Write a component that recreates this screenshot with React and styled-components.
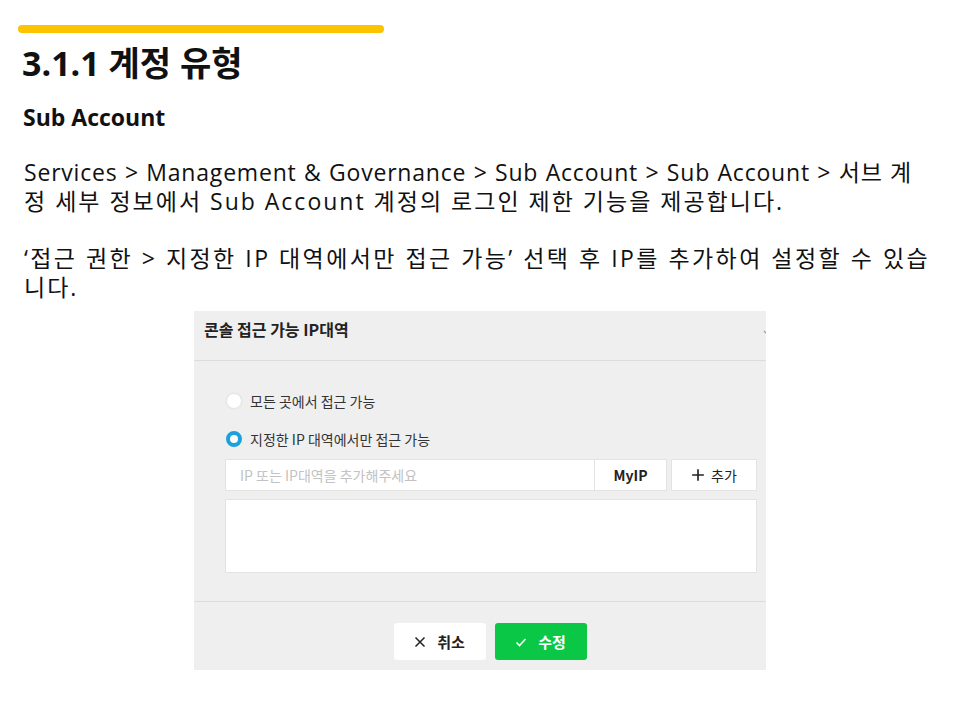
import React from 'react';
import styled, { createGlobalStyle } from 'styled-components';

const Global = createGlobalStyle`
  body {
    margin: 0;
    background: #fff;
    font-family: "Open Sans", "Noto Sans CJK KR", sans-serif;
    color: #111;
  }
`;

const Page = styled.div`
  width: 960px;
  height: 720px;
  padding: 25px 0 0 18px;
  box-sizing: border-box;
  overflow: hidden;
`;

const Bar = styled.div`
  width: 366px;
  height: 8px;
  border-radius: 4px;
  background: #fbc300;
`;

const Heading = styled.h1`
  margin: 8px 0 0 4px;
  font-size: 34px;
  line-height: 44px;
  font-weight: 700;
  font-family: "Open Sans", "Noto Sans CJK KR", sans-serif;
`;

const SubHeading = styled.h2`
  margin: 17px 0 0 5px;
  font-size: 23px;
  line-height: 30px;
  font-weight: 700;
`;

const Para = styled.p`
  margin: ${(p) => p.$top}px 0 0 6px;
  width: ${(p) => (p.$fill ? `${p.$fill}px` : 'auto')};
  font-size: 23px;
  line-height: 29px;
  letter-spacing: ${(p) => p.$spacing || 0}px;
  white-space: nowrap;
  text-align: ${(p) => (p.$fill ? 'justify' : 'left')};
  text-align-last: ${(p) => (p.$fill ? 'justify' : 'left')};
`;

const Dialog = styled.div`
  width: 572px;
  margin: 9px 0 0 176px;
  background: #efefef;
  font-family: "Noto Sans CJK KR", "Noto Sans", sans-serif;
  overflow: hidden;
`;

const Header = styled.div`
  height: 50px;
  display: flex;
  align-items: flex-start;
  justify-content: space-between;
  padding: 6px 0 0 10px;
  border-bottom: 1px solid #dcdcdc;
  box-sizing: border-box;
`;

const Title = styled.div`
  font-size: 16px;
  line-height: 24px;
  font-weight: 700;
  color: #222;
`;

const CloseMark = styled.div`
  width: 3px;
  height: 12px;
  margin-top: 6px;
  overflow: hidden;
`;

const Body = styled.div`
  padding: 32px 9px 28px 31px;
  border-bottom: 1px solid #dcdcdc;
`;

const RadioRow = styled.div`
  display: flex;
  align-items: center;
  gap: 8px;
  height: 16px;
  font-size: 14px;
  color: #333;
  margin-bottom: ${(p) => p.$gap}px;
`;

const Radio = styled.span`
  width: 16px;
  height: 16px;
  margin-left: 1px;
  border-radius: 50%;
  box-sizing: border-box;
  background: #fff;
  border: ${(p) => (p.$checked ? '4px solid #1ba2dd' : '1px solid #e6e6e6')};
  box-shadow: ${(p) => (p.$checked ? 'none' : '0 0 2px rgba(0, 0, 0, 0.06)')};
`;

const InputRow = styled.div`
  display: flex;
  height: 32px;
  gap: 4px;
`;

const InputGroup = styled.div`
  flex: 1;
  display: flex;
  background: #fff;
  border: 1px solid #e3e3e3;
`;

const Input = styled.div`
  flex: 1;
  display: flex;
  align-items: center;
  padding-left: 14px;
  font-size: 14px;
  color: #c2c2c2;
`;

const Btn = styled.div`
  display: flex;
  align-items: center;
  justify-content: center;
  gap: 6px;
  width: ${(p) => p.$w}px;
  background: #fff;
  font-size: 14px;
  font-weight: ${(p) => (p.$bold ? 700 : 400)};
  color: #222;
  border: ${(p) => (p.$joined ? 'none' : '1px solid #e3e3e3')};
  border-left: 1px solid #e3e3e3;
  box-sizing: border-box;
`;

const ListBox = styled.div`
  margin-top: 8px;
  height: 74px;
  background: #fff;
  border: 1px solid #e3e3e3;
  box-sizing: border-box;
`;

const Footer = styled.div`
  height: 68px;
  display: flex;
  justify-content: center;
  align-items: flex-start;
  gap: 9px;
  padding: 21px 0 0 20px;
  box-sizing: border-box;
`;

const ActionButton = styled.div`
  width: 92px;
  height: 37px;
  border-radius: 3px;
  display: flex;
  align-items: center;
  justify-content: center;
  gap: 11px;
  font-size: 15px;
  font-weight: 700;
  background: ${(p) => (p.$primary ? '#0ac746' : '#fff')};
  color: ${(p) => (p.$primary ? '#fff' : '#222')};
`;

const Icon = ({ children, size = 12, color = 'currentColor', width = 1.6 }) => (
  <svg width={size} height={size} viewBox="0 0 12 12" fill="none" stroke={color} strokeWidth={width}>
    {children}
  </svg>
);

export default function App() {
  return (
    <Page>
      <Global />
      <Bar />
      <Heading>3.1.1 계정 유형</Heading>
      <SubHeading>Sub Account</SubHeading>
      <Para $top={26} $fill={888} $spacing={0.8}>
        Services &gt; Management &amp; Governance &gt; Sub Account &gt; Sub Account &gt; 서브 계
      </Para>
      <Para $top={0} $spacing={2}>정 세부 정보에서 Sub Account 계정의 로그인 제한 기능을 제공합니다.</Para>
      <Para $top={28} $fill={906} $spacing={2.4}>
        ‘접근 권한 &gt; 지정한 IP 대역에서만 접근 가능’ 선택 후 IP를 추가하여 설정할 수 있습
      </Para>
      <Para $top={0} $spacing={2}>니다.</Para>
      <Dialog>
        <Header>
          <Title>콘솔 접근 가능 IP대역</Title>
          <CloseMark>
            <Icon size={12} color="#999" width={1.2}>
              <path d="M1 1l10 10M11 1L1 11" />
            </Icon>
          </CloseMark>
        </Header>
        <Body>
          <RadioRow $gap={22}>
            <Radio />
            모든 곳에서 접근 가능
          </RadioRow>
          <RadioRow $gap={12}>
            <Radio $checked />
            지정한 IP 대역에서만 접근 가능
          </RadioRow>
          <InputRow>
            <InputGroup>
              <Input>IP 또는 IP대역을 추가해주세요</Input>
              <Btn $w={72} $bold $joined>MyIP</Btn>
            </InputGroup>
            <Btn $w={86}>
              <Icon size={14} width={1.4}>
                <path d="M6 1v10M1 6h10" />
              </Icon>
              추가
            </Btn>
          </InputRow>
          <ListBox />
        </Body>
        <Footer>
          <ActionButton>
            <Icon size={12} width={1.5}>
              <path d="M1.5 1.5l9 9M10.5 1.5l-9 9" />
            </Icon>
            취소
          </ActionButton>
          <ActionButton $primary>
            <Icon size={12} width={1.6}>
              <path d="M1.5 6.5l3 3 6-6.5" />
            </Icon>
            수정
          </ActionButton>
        </Footer>
      </Dialog>
    </Page>
  );
}
